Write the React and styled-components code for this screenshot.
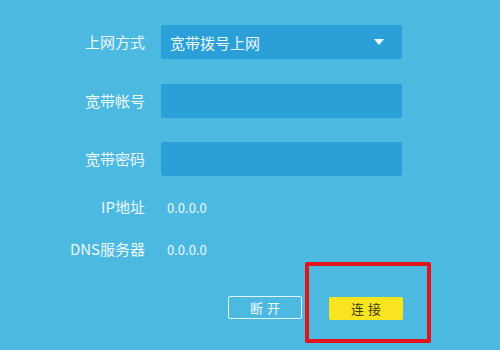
import styled, { createGlobalStyle } from 'styled-components';

const GlobalStyle = createGlobalStyle`
  html, body {
    margin: 0;
    padding: 0;
    background: #4bb9e0;
  }
  body {
    font-family: "Noto Sans CJK SC", "Noto Sans", sans-serif;
    color: #f2f9fc;
  }
`;

const Page = styled.div`
  width: 500px;
  height: 350px;
  background: #4bb9e0;
  overflow: hidden;
  padding-top: 25px;
  box-sizing: border-box;
`;

const Row = styled.div`
  display: flex;
  align-items: center;
  height: ${(p) => p.$h || 34}px;
  margin-top: ${(p) => p.$top || 0}px;
`;

const Label = styled.div`
  width: 145px;
  flex-shrink: 0;
  text-align: right;
  font-size: 15px;
  line-height: 20px;
  color: #eef8fc;
  margin-right: 16px;
  white-space: nowrap;
`;

const Field = styled.div`
  width: 241px;
  height: 34px;
  background: #2b9fd7;
  border-radius: 2px;
  box-sizing: border-box;
  display: flex;
  align-items: center;
  padding: 0 18px 0 9px;
  font-size: 15px;
  color: #eef8fc;
`;

const SelectText = styled.span`
  flex: 1;
`;

const Caret = styled.span`
  width: 0;
  height: 0;
  border-left: 5px solid transparent;
  border-right: 5px solid transparent;
  border-top: 6px solid #f4fbfe;
`;

const Value = styled.div`
  font-size: 13px;
  color: #eef8fc;
  padding-left: 6px;
`;

const Buttons = styled.div`
  display: flex;
  align-items: center;
  gap: 27px;
  margin-top: 37px;
  padding-left: 228px;
  height: 23px;
`;

const Button = styled.button`
  width: 74px;
  height: 23px;
  box-sizing: border-box;
  border-radius: 2px;
  font-family: "Noto Sans CJK SC", "Noto Sans", sans-serif;
  font-size: 13px;
  letter-spacing: 4px;
  text-indent: 4px;
  padding: 0;
  cursor: pointer;
  border: ${(p) => (p.$primary ? 'none' : '1.5px solid #e6f5fb')};
  background: ${(p) => (p.$primary ? '#f8e51f' : 'transparent')};
  color: ${(p) => (p.$primary ? '#3a3a20' : '#f2f9fc')};
`;

const Highlight = styled.div`
  position: relative;
  &::after {
    content: '';
    position: absolute;
    top: -33px;
    bottom: -23px;
    left: -24px;
    right: -28px;
    border: 4px solid #e1131b;
    border-radius: 2px;
    pointer-events: none;
  }
`;

export default function App() {
  return (
    <>
      <GlobalStyle />
      <Page>
        <Row>
          <Label>上网方式</Label>
          <Field>
            <SelectText>宽带拨号上网</SelectText>
            <Caret />
          </Field>
        </Row>
        <Row $top={25}>
          <Label>宽带帐号</Label>
          <Field />
        </Row>
        <Row $top={24}>
          <Label>宽带密码</Label>
          <Field />
        </Row>
        <Row $top={21} $h={20}>
          <Label>IP地址</Label>
          <Value>0.0.0.0</Value>
        </Row>
        <Row $top={22} $h={20}>
          <Label>DNS服务器</Label>
          <Value>0.0.0.0</Value>
        </Row>
        <Buttons>
          <Button>断开</Button>
          <Highlight>
            <Button $primary>连接</Button>
          </Highlight>
        </Buttons>
      </Page>
    </>
  );
}
